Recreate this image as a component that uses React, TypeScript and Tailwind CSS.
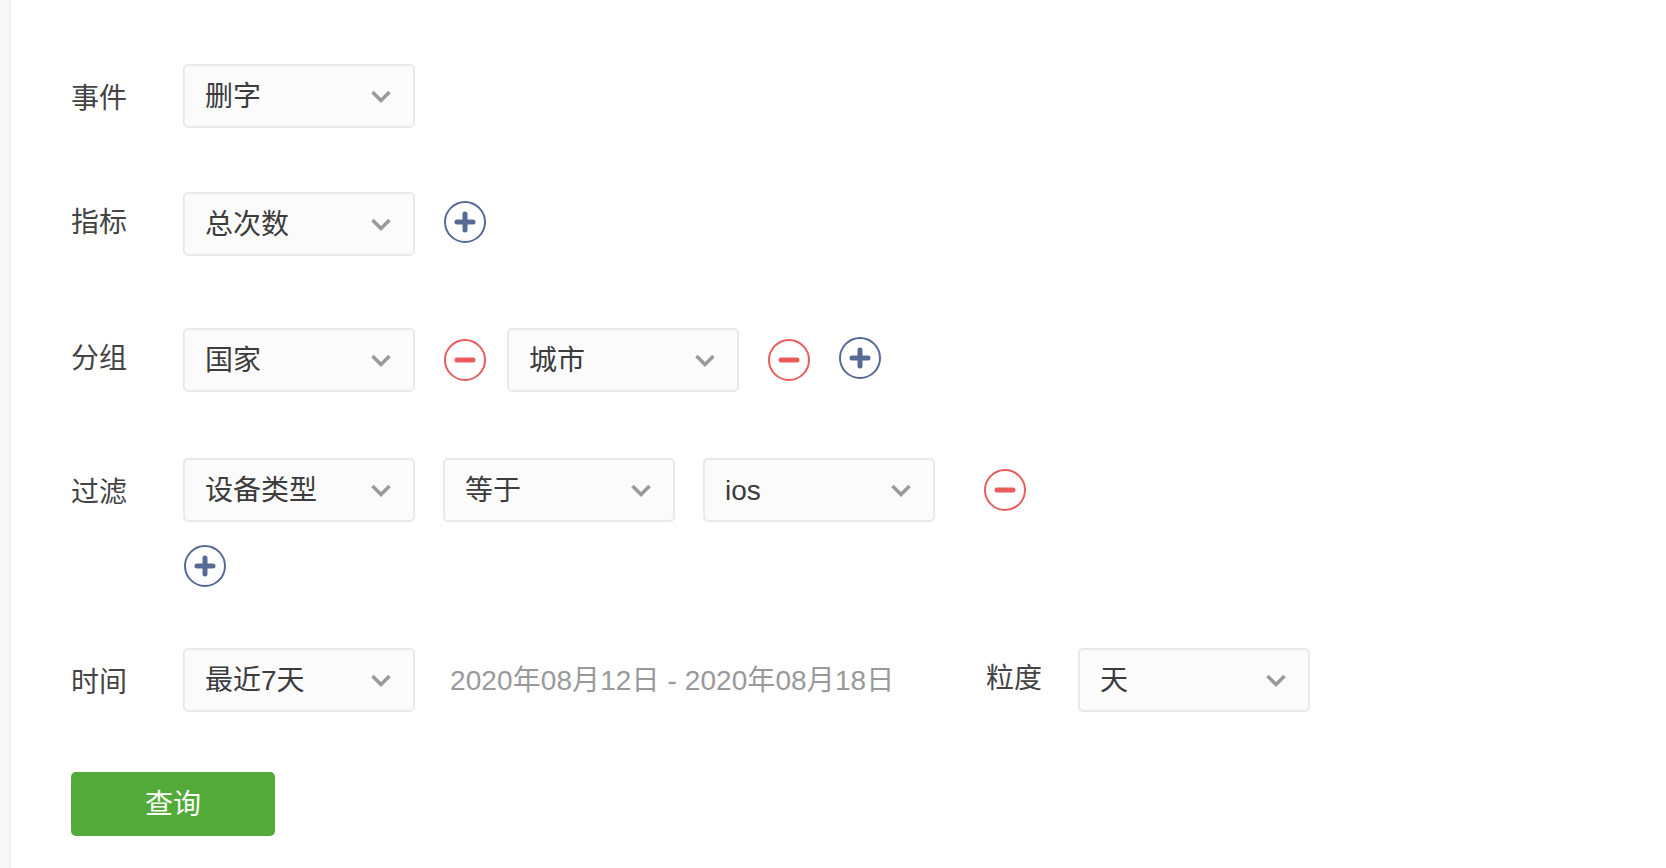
const Chevron = () => (
  <svg width="20" height="13" viewBox="0 0 20 13" fill="none" className="shrink-0">
    <path d="M1.5 2L10 10.5L18.5 2" stroke="#999999" strokeWidth="3.5" />
  </svg>
)

const Select = ({ value }: { value: string }) => (
  <div className="flex h-16 w-[232px] shrink-0 items-center justify-between rounded-[5px] border-2 border-[#e6e9ed] bg-[#fbfbfc] pl-5 pr-[22px] text-[#3c3c3c]">
    <span className="mt-0.5">{value}</span>
    <Chevron />
  </div>
)

const PlusButton = ({ className = "" }: { className?: string }) => (
  <svg width="42" height="42" viewBox="0 0 42 42" fill="none" className={"shrink-0 " + className}>
    <circle cx="21" cy="21" r="20" stroke="#566a96" strokeWidth="2" />
    <path d="M13 21H29M21 13V29" stroke="#566a96" strokeWidth="5" strokeLinecap="round" />
  </svg>
)

const MinusButton = ({ className = "" }: { className?: string }) => (
  <svg width="42" height="42" viewBox="0 0 42 42" fill="none" className={"shrink-0 " + className}>
    <circle cx="21" cy="21" r="20" stroke="#e95c5c" strokeWidth="2" />
    <path d="M13 21H29" stroke="#e95c5c" strokeWidth="5" strokeLinecap="round" />
  </svg>
)

const Label = ({ text, className = "" }: { text: string; className?: string }) => (
  <span className={"w-[112px] shrink-0 text-[#444444] " + className}>{text}</span>
)

export default function App() {
  return (
    <div className="flex min-h-screen bg-white font-['Liberation_Sans','Noto_Sans_CJK_SC',sans-serif] text-[28px] leading-none">
      <div className="w-[11px] shrink-0 border-r border-[#eef0f3] bg-[#f6f7f9]" />
      <div className="flex flex-col pl-[60px] pt-16">
        <div className="flex items-center">
          <Label text="事件" className="mt-1.5" />
          <Select value="删字" />
        </div>

        <div className="mt-16 flex items-center">
          <Label text="指标" className="-mt-0.5" />
          <Select value="总次数" />
          <PlusButton className="-mt-1 ml-[29px]" />
        </div>

        <div className="mt-[72px] flex items-center">
          <Label text="分组" className="-mt-0.5" />
          <Select value="国家" />
          <MinusButton className="ml-[29px]" />
          <div className="ml-[21px]">
            <Select value="城市" />
          </div>
          <MinusButton className="ml-[29px]" />
          <PlusButton className="-mt-1 ml-[29px]" />
        </div>

        <div className="mt-[66px] flex items-center">
          <Label text="过滤" className="mt-1.5" />
          <Select value="设备类型" />
          <div className="ml-7">
            <Select value="等于" />
          </div>
          <div className="ml-7">
            <Select value="ios" />
          </div>
          <MinusButton className="ml-[49px]" />
        </div>

        <div className="ml-[112px] mt-[23px]">
          <PlusButton className="ml-px" />
        </div>

        <div className="mt-[61px] flex items-center">
          <Label text="时间" className="mt-1.5" />
          <Select value="最近7天" />
          <span className="ml-[35px] mt-0.5 w-[536px] shrink-0 tracking-[0.09px] text-[#999999]">2020年08月12日 - 2020年08月18日</span>
          <span className="-mt-0.5 w-[92px] shrink-0 text-[#444444]">粒度</span>
          <Select value="天" />
        </div>

        <button className="mt-[60px] h-16 w-[204px] rounded-[5px] bg-[#52aa38] pt-0.5 text-white">查询</button>
      </div>
    </div>
  )
}
